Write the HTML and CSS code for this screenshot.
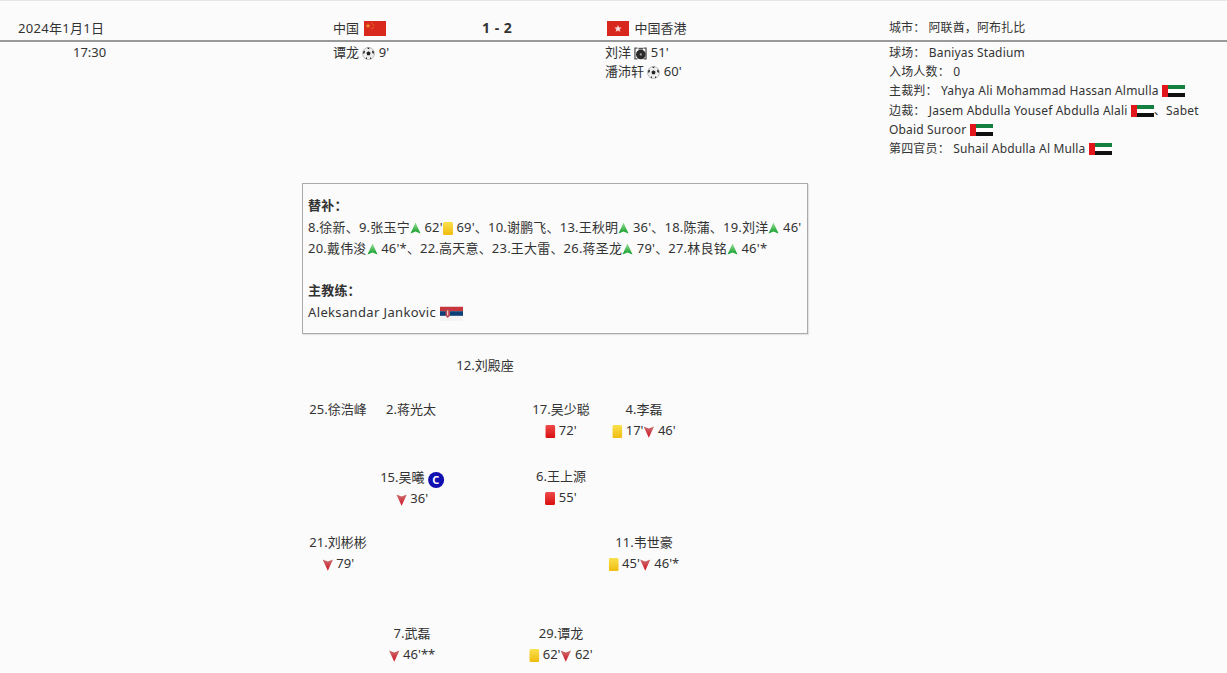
FILE: index.html
```html
<!DOCTYPE html>
<html lang="zh-CN">
<head>
<meta charset="utf-8">
<title>中国 1 - 2 中国香港</title>
<link rel="stylesheet" href="styles.css">
</head>
<body>
<svg class="defs" width="0" height="0" aria-hidden="true">
  <defs>
    <linearGradient id="gUp" x1="0" y1="0" x2="0" y2="1"><stop offset="0" stop-color="#9be39b"/><stop offset="1" stop-color="#0c9a24"/></linearGradient>
    <linearGradient id="gDown" x1="0" y1="0" x2="0" y2="1"><stop offset="0" stop-color="#c97070"/><stop offset="1" stop-color="#d40f20"/></linearGradient>
    <linearGradient id="gYellow" x1="0" y1="0" x2="0" y2="1"><stop offset="0" stop-color="#f9e04c"/><stop offset="1" stop-color="#f0bc10"/></linearGradient>
    <linearGradient id="gRed" x1="0" y1="0" x2="0" y2="1"><stop offset="0" stop-color="#f04a4a"/><stop offset="1" stop-color="#d80f0f"/></linearGradient>
    <symbol id="up" viewBox="0 0 11 12"><path d="M5.5 .5 10.5 11.5 5.5 9.5 .5 11.5Z" fill="url(#gUp)"/></symbol>
    <symbol id="down" viewBox="0 0 11 12"><path d="M.3 .5 5.5 2.5 10.7 .5 5.5 11.8Z" fill="url(#gDown)"/></symbol>
    <symbol id="yellow" viewBox="0 0 10 13"><rect width="10" height="13" rx="1.5" fill="url(#gYellow)"/></symbol>
    <symbol id="red" viewBox="0 0 10 13"><rect width="10" height="13" rx="1.5" fill="url(#gRed)"/></symbol>
    <symbol id="ball" viewBox="0 0 13 13"><circle cx="6.5" cy="6.5" r="6" fill="#eee" stroke="#999" stroke-width=".6"/><path d="M6.5 4.3 8.6 5.8 7.8 8.2H5.2L4.4 5.8Z M1.2 4.5 3 3.4 2.6 6.2 1 6.8Z M11.8 4.5 10 3.4 10.4 6.2 12 6.8Z M5 .8H8L6.5 2.2Z M3.5 11.5 4.8 10 5 12.3Z M9.5 11.5 8.2 10 8 12.3Z" fill="#222"/></symbol>
    <symbol id="pen" viewBox="0 0 13 13"><path d="M.3 .5H3.5V1.8H1.6V11.2H3.5V12.5H.3Z M12.7 .5H9.5V1.8H11.4V11.2H9.5V12.5H12.7Z" fill="#555"/><circle cx="6.8" cy="7.5" r="4.8" fill="#2a2a2a"/><path d="M6.8 6 8 7 7.6 8.6H6L5.6 7Z" fill="#999"/><rect x="4.5" y=".8" width="4.5" height="1.8" fill="#555"/></symbol>
    <symbol id="cn" viewBox="0 0 22 15"><rect width="22" height="15" fill="#d9291c"/><path d="M4 2 4.7 4H6.7L5.1 5.2 5.7 7.1 4 6 2.3 7.1 2.9 5.2 1.3 4H3.3Z" fill="#e8902a"/><circle cx="8" cy="2" r=".6" fill="#e8902a"/><circle cx="9.2" cy="3.8" r=".6" fill="#e8902a"/><circle cx="9.2" cy="6" r=".6" fill="#e8902a"/><circle cx="8" cy="7.6" r=".6" fill="#e8902a"/></symbol>
    <symbol id="hk" viewBox="0 0 22 15"><rect width="22" height="15" fill="#d8281e"/><path d="M11 4 12 6.4 14.6 6.6 12.6 8.2 13.3 10.8 11 9.4 8.7 10.8 9.4 8.2 7.4 6.6 10 6.4Z" fill="#f7dcdc"/></symbol>
    <symbol id="ae" viewBox="0 0 23 12"><rect width="23" height="4" fill="#13803f"/><rect y="4" width="23" height="4" fill="#fff"/><rect y="8" width="23" height="4" fill="#111"/><rect width="6" height="12" fill="#e0161b"/></symbol>
    <symbol id="rs" viewBox="0 0 23 15"><rect width="23" height="15" fill="#f4f4f4"/><rect y=".8" width="23" height="4.4" fill="#c6363c"/><rect y="5.2" width="23" height="4.6" fill="#0c4076"/><path d="M5.5 3H10V9.5L7.7 12 5.5 9.5Z" fill="#b8434a"/><rect x="7.2" y="4.5" width="1" height="5" fill="#eee"/></symbol>
  </defs>
</svg>

<main class="page">
  <section class="match">
    <div class="cell date">2024年1月1日</div>
    <div class="cell team">中国 <svg class="flag-22"><use href="#cn"/></svg></div>
    <div class="cell score">1 - 2</div>
    <div class="cell team away">
      <svg class="flag-22"><use href="#hk"/></svg> 中国香港</div>
    <div class="cell info-city">城市： 阿联酋，阿布扎比</div>

    <div class="time">17:30</div>
    <div class="scorers"><div>谭龙 <svg class="i-ball"><use href="#ball"/></svg> 9'</div></div>
    <div></div>
    <div class="scorers">
      <div>刘洋 <svg class="i-pen"><use href="#pen"/></svg> 51'</div>
      <div>潘沛轩 <svg class="i-ball"><use href="#ball"/></svg> 60'</div>
    </div>
    <div class="info">
      <div>球场： Baniyas Stadium</div>
      <div>入场人数： 0</div>
      <div>主裁判： Yahya Ali Mohammad Hassan Almulla <svg class="flag-ae"><use href="#ae"/></svg></div>
      <div>边裁： Jasem Abdulla Yousef Abdulla Alali <svg class="flag-ae"><use href="#ae"/></svg>、Sabet Obaid Suroor <svg class="flag-ae"><use href="#ae"/></svg></div>
      <div>第四官员： Suhail Abdulla Al Mulla <svg class="flag-ae"><use href="#ae"/></svg></div>
    </div>
  </section>

  <section class="bench">
    <div><b>替补：</b></div>
    <div>8.徐新、9.张玉宁<svg class="i-up"><use href="#up"/></svg> 62'<svg class="i-card"><use href="#yellow"/></svg> 69'、10.谢鹏飞、13.王秋明<svg class="i-up"><use href="#up"/></svg> 36'、18.陈蒲、19.刘洋<svg class="i-up"><use href="#up"/></svg> 46'</div>
    <div>20.戴伟浚<svg class="i-up"><use href="#up"/></svg> 46'*、22.高天意、23.王大雷、26.蒋圣龙<svg class="i-up"><use href="#up"/></svg> 79'、27.林良铭<svg class="i-up"><use href="#up"/></svg> 46'*</div>
    <div class="gap"><b>主教练：</b></div>
    <div class="coach">Aleksandar Jankovic <svg class="flag-rs"><use href="#rs"/></svg></div>
  </section>

  <section class="pitch">
    <div class="player p-gk">12.刘殿座</div>
    <div class="player p-a1">25.徐浩峰</div>
    <div class="player p-a2">2.蒋光太</div>
    <div class="player p-a3">17.吴少聪<div class="ev"><svg class="i-card"><use href="#red"/></svg> 72'</div></div>
    <div class="player p-a4">4.李磊<div class="ev"><svg class="i-card"><use href="#yellow"/></svg> 17'<svg class="i-down"><use href="#down"/></svg> 46'</div></div>
    <div class="player p-b1">15.吴曦 <span class="captain">C</span><div class="ev"><svg class="i-down"><use href="#down"/></svg> 36'</div></div>
    <div class="player p-b2">6.王上源<div class="ev"><svg class="i-card"><use href="#red"/></svg> 55'</div></div>
    <div class="player p-c1">21.刘彬彬<div class="ev"><svg class="i-down"><use href="#down"/></svg> 79'</div></div>
    <div class="player p-c2">11.韦世豪<div class="ev"><svg class="i-card"><use href="#yellow"/></svg> 45'<svg class="i-down"><use href="#down"/></svg> 46'*</div></div>
    <div class="player p-d1">7.武磊<div class="ev"><svg class="i-down"><use href="#down"/></svg> 46'**</div></div>
    <div class="player p-d2">29.谭龙<div class="ev"><svg class="i-card"><use href="#yellow"/></svg> 62'<svg class="i-down"><use href="#down"/></svg> 62'</div></div>
  </section>
</main>
</body>
</html>
```

FILE: styles.css
```css
* { box-sizing: border-box; }

html, body {
  margin: 0;
  height: 100%;
  overflow: hidden;
}

body {
  background: #fbfbfb;
  color: #333;
  font-family: "Noto Sans", "Noto Sans CJK SC", sans-serif;
  font-size: 13px;
}

.defs { position: absolute; }

svg { vertical-align: middle; }

.page {
  height: 673px;
  overflow: hidden;
  border-top: 1px solid #e6e6e6;
}

.match {
  display: grid;
  grid-template-columns: 333px 149px 123px 284px 1fr;
  grid-template-rows: 41px auto;
  align-items: start;
}

.cell {
  display: flex;
  align-items: center;
  gap: 2px;
  height: 41px;
  padding-top: 13px;
  border-bottom: 2px solid #999;
  white-space: pre;
}

.date {
  padding-left: 18px;
  letter-spacing: .3px;
}

.team svg { margin-top: 2px; }
.away { padding-left: 2px; }

.score {
  font-size: 14px;
  font-weight: 700;
  word-spacing: 1px;
}

.info-city {
  font-size: 12px;
  letter-spacing: .1px;
}

.time {
  padding: 1px 0 0 73px;
  line-height: 19px;
}

.scorers {
  padding-top: 1px;
  line-height: 19px;
}

.info {
  padding: 1px 22px 0 0;
  font-size: 12px;
  letter-spacing: .17px;
  line-height: 19.2px;
}

.flag-22 { width: 22px; height: 15px; }
.flag-ae { width: 23px; height: 12px; vertical-align: -2px; }
.flag-rs { width: 23px; height: 15px; }
.i-ball { width: 13px; height: 13px; }
.i-pen { width: 13px; height: 13px; }
.i-up { width: 11px; height: 12px; }
.i-down { width: 11px; height: 12px; }
.i-card { width: 10px; height: 13px; }

.bench {
  width: 506px;
  height: 151px;
  margin: 25px 0 0 302px;
  padding: 11px 5px 0;
  border: 1px solid #aaa;
  box-shadow: 1px 1px 1px #e4e4e4;
  letter-spacing: .2px;
  line-height: 21.3px;
  white-space: nowrap;
}

.bench .gap { margin-top: 21.3px; }
.bench .coach { letter-spacing: .36px; }

.pitch {
  position: relative;
}

.player {
  position: absolute;
  transform: translateX(-50%);
  line-height: 21px;
  text-align: center;
  white-space: nowrap;
}

.captain {
  display: inline-block;
  width: 16px;
  height: 16px;
  border-radius: 50%;
  background: #1010b0;
  color: #fff;
  font-size: 11px;
  font-weight: 700;
  line-height: 16px;
  vertical-align: -2px;
}

.p-gk { left: 485px; top: 21px; }
.p-a1 { left: 338px; top: 65px; }
.p-a2 { left: 411px; top: 65px; }
.p-a3 { left: 561px; top: 65px; }
.p-a4 { left: 644px; top: 65px; }
.p-b1 { left: 412px; top: 133px; }
.p-b2 { left: 561px; top: 132px; }
.p-c1 { left: 338px; top: 198px; }
.p-c2 { left: 644px; top: 198px; }
.p-d1 { left: 412px; top: 289px; }
.p-d2 { left: 561px; top: 289px; }
```
